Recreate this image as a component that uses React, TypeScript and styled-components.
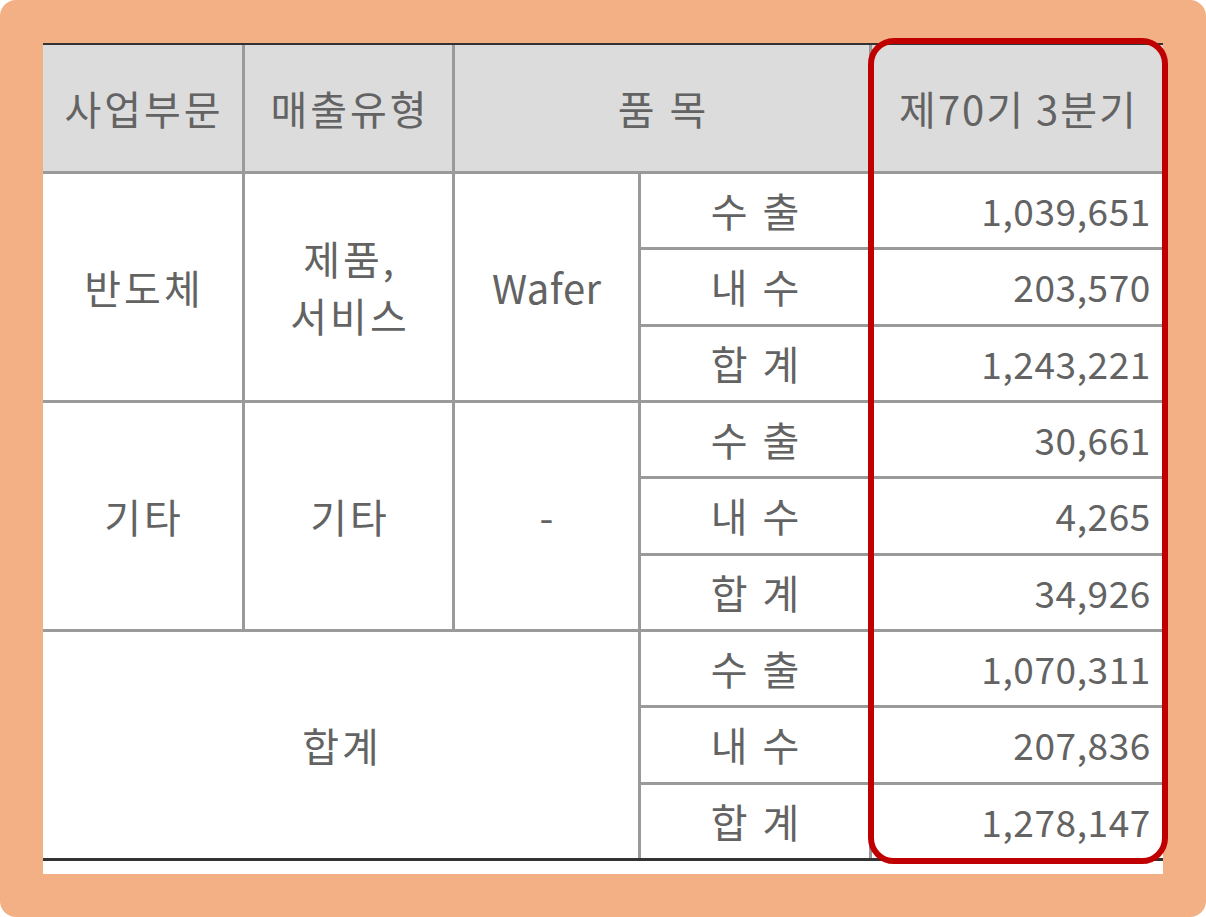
import React from 'react';
import styled, { createGlobalStyle } from 'styled-components';

const GlobalStyle = createGlobalStyle`
  html, body {
    margin: 0;
    padding: 0;
    background: #ffffff;
  }
  body {
    font-family: 'Noto Sans CJK KR', 'Noto Sans', sans-serif;
  }
`;

const Frame = styled.div`
  position: relative;
  width: 1206px;
  height: 917px;
  box-sizing: border-box;
  padding: 43px;
  background: #f3b084;
  border-radius: 16px;
`;

const Sheet = styled.div`
  height: 100%;
  background: #ffffff;
`;

const Grid = styled.div`
  display: grid;
  grid-template-columns: 199px 207px 183px 228px 291px;
  grid-template-rows: 126px repeat(9, 1fr);
  gap: 3px;
  height: 818px;
  box-sizing: border-box;
  background: #9a9a9a;
  border-top: 2px solid #333333;
  border-bottom: 3px solid #333333;
`;

interface CellProps {
  $col: string;
  $row: string;
  $head?: boolean;
  $num?: boolean;
  $tracking?: number;
}

const Cell = styled.div<CellProps>`
  grid-column: ${(p) => p.$col};
  grid-row: ${(p) => p.$row};
  background: ${(p) => (p.$head ? '#dcdcdc' : '#ffffff')};
  display: flex;
  align-items: center;
  justify-content: ${(p) => (p.$num ? 'flex-end' : 'center')};
  padding-right: ${(p) => (p.$num ? '12px' : '0')};
  padding-left: ${(p) => (p.$num ? 0 : p.$tracking ?? 3)}px;
  letter-spacing: ${(p) => (p.$num ? 0.6 : p.$tracking ?? 3)}px;
  text-align: center;
  font-size: ${(p) => (p.$num ? 37 : 40)}px;
  line-height: 57px;
  color: #636363;
  white-space: pre;
`;

const Highlight = styled.div`
  position: absolute;
  left: 868px;
  top: 38px;
  width: 300px;
  height: 826px;
  box-sizing: border-box;
  border: 6px solid #c00000;
  border-radius: 26px;
  pointer-events: none;
`;

const kinds = ['수 출', '내 수', '합 계'];

const values = [
  '1,039,651',
  '203,570',
  '1,243,221',
  '30,661',
  '4,265',
  '34,926',
  '1,070,311',
  '207,836',
  '1,278,147',
];

const App = () => {
  return (
    <>
      <GlobalStyle />
      <Frame>
        <Sheet>
          <Grid>
            <Cell $head $col="1" $row="1">사업부문</Cell>
            <Cell $head $col="2" $row="1">매출유형</Cell>
            <Cell $head $col="3 / 5" $row="1">품 목</Cell>
            <Cell $head $col="5" $row="1" $tracking={2}>제70기 3분기</Cell>

            <Cell $col="1" $row="2 / 5">반도체</Cell>
            <Cell $col="2" $row="2 / 5">{'제품,\n서비스'}</Cell>
            <Cell $col="3" $row="2 / 5" $tracking={0.5}>Wafer</Cell>

            <Cell $col="1" $row="5 / 8">기타</Cell>
            <Cell $col="2" $row="5 / 8">기타</Cell>
            <Cell $col="3" $row="5 / 8">-</Cell>

            <Cell $col="1 / 4" $row="8 / 11">합계</Cell>

            {values.map((v, i) => (
              <React.Fragment key={i}>
                <Cell $col="4" $row={String(i + 2)}>{kinds[i % 3]}</Cell>
                <Cell $num $col="5" $row={String(i + 2)}>{v}</Cell>
              </React.Fragment>
            ))}
          </Grid>
        </Sheet>
        <Highlight />
      </Frame>
    </>
  );
};

export default App;
